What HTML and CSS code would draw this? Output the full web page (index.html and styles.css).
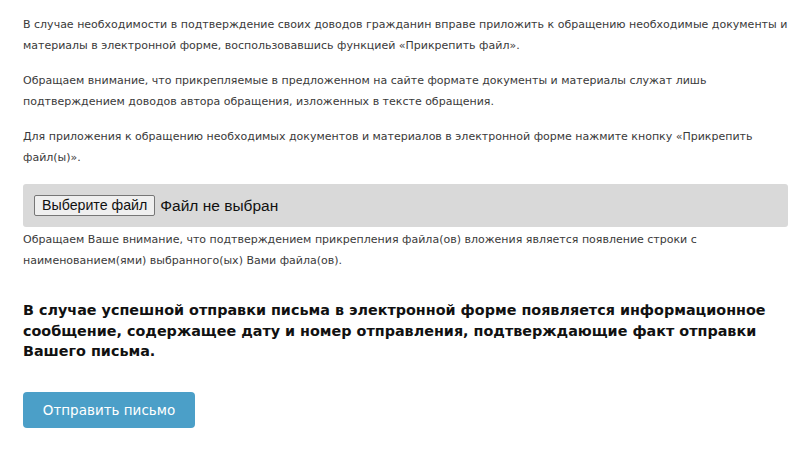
FILE: index.html
```html
<!DOCTYPE html>
<html lang="ru">
<head>
<meta charset="utf-8">
<title>Прикрепить файл</title>
<link rel="stylesheet" href="styles.css">
</head>
<body>
<div class="page">
  <p class="txt">В случае необходимости в подтверждение своих доводов гражданин вправе приложить к обращению необходимые документы и материалы в электронной форме, воспользовавшись функцией «Прикрепить файл».</p>
  <p class="txt">Обращаем внимание, что прикрепляемые в предложенном на сайте формате документы и материалы служат лишь подтверждением доводов автора обращения, изложенных в тексте обращения.</p>
  <p class="txt">Для приложения к обращению необходимых документов и материалов в электронной форме нажмите кнопку «Прикрепить файл(ы)».</p>
  <div class="filebox">
    <button class="filebtn" type="button">Выберите файл</button>
    <span class="filename">Файл не выбран</span>
  </div>
  <p class="txt note">Обращаем Ваше внимание, что подтверждением прикрепления файла(ов) вложения является появление строки с наименованием(ями) выбранного(ых) Вами файла(ов).</p>
  <p class="lead">В случае успешной отправки письма в электронной форме появляется информационное сообщение, содержащее дату и номер отправления, подтверждающие факт отправки Вашего письма.</p>
  <button class="send" type="button">Отправить письмо</button>
</div>
</body>
</html>
```

FILE: styles.css
```css
html, body {
  margin: 0;
  padding: 0;
  background: #ffffff;
}

.page {
  width: 765px;
  padding: 14px 0 0 23px;
  font-family: "DejaVu Sans", Verdana, sans-serif;
}

.txt {
  margin: 0 0 14px 0;
  font-size: 11px;
  line-height: 21px;
  color: #3a3a3a;
}

.filebox {
  margin-top: 16px;
  height: 43px;
  background: #d9d9d9;
  border-radius: 3px;
  display: flex;
  align-items: center;
  padding-left: 11px;
  box-sizing: border-box;
}

.filebtn {
  font-family: Arial, "Liberation Sans", sans-serif;
  font-size: 14.2px;
  height: 21px;
  padding: 0 7px;
  margin: 0;
  background: #efefef;
  border: 1px solid #767676;
  border-radius: 2px;
  color: #111;
  line-height: 19px;
}

.filename {
  font-family: Arial, "Liberation Sans", sans-serif;
  font-size: 15.5px;
  color: #111;
  margin-left: 5px;
}

.note {
  margin-top: 2px;
}

.lead {
  margin: 29px 0 0 0;
  font-size: 14.35px;
  font-weight: bold;
  line-height: 20.5px;
  color: #111;
}

.send {
  margin-top: 30px;
  width: 172px;
  height: 36px;
  background: #4b9fc8;
  border: none;
  border-radius: 4px;
  color: #ffffff;
  font-family: "DejaVu Sans", Verdana, sans-serif;
  font-size: 13.5px;
  padding: 0;
}
```
